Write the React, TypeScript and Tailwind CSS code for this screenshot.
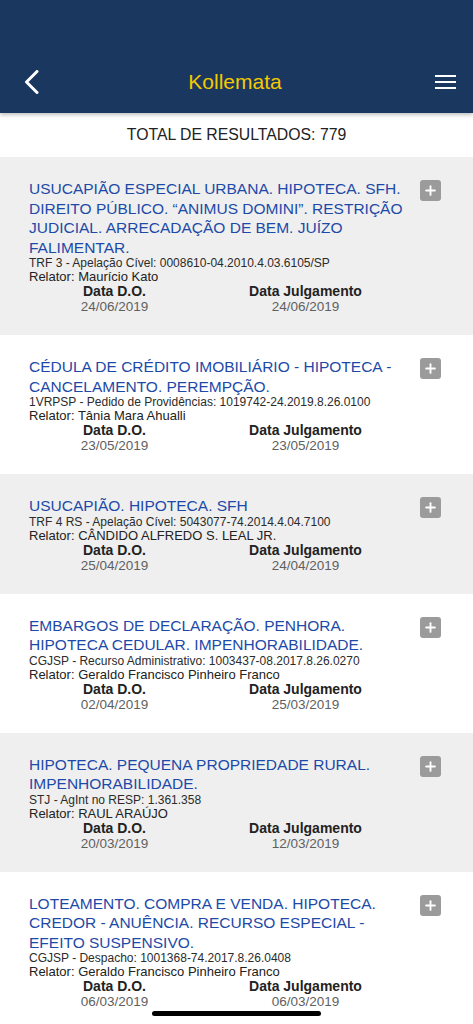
import { Plus } from "lucide-react";

interface Result {
  title: string;
  source: string;
  relator: string;
  dataDO: string;
  dataJulgamento: string;
}

const results: Result[] = [
  {
    title:
      "USUCAPIÃO ESPECIAL URBANA. HIPOTECA. SFH. DIREITO PÚBLICO. “ANIMUS DOMINI”. RESTRIÇÃO JUDICIAL. ARRECADAÇÃO DE BEM. JUÍZO FALIMENTAR.",
    source: "TRF 3 - Apelação Cível: 0008610-04.2010.4.03.6105/SP",
    relator: "Relator: Maurício Kato",
    dataDO: "24/06/2019",
    dataJulgamento: "24/06/2019",
  },
  {
    title: "CÉDULA DE CRÉDITO IMOBILIÁRIO - HIPOTECA - CANCELAMENTO. PEREMPÇÃO.",
    source: "1VRPSP - Pedido de Providências: 1019742-24.2019.8.26.0100",
    relator: "Relator: Tânia Mara Ahualli",
    dataDO: "23/05/2019",
    dataJulgamento: "23/05/2019",
  },
  {
    title: "USUCAPIÃO. HIPOTECA. SFH",
    source: "TRF 4 RS - Apelação Cível: 5043077-74.2014.4.04.7100",
    relator: "Relator: CÂNDIDO ALFREDO S. LEAL JR.",
    dataDO: "25/04/2019",
    dataJulgamento: "24/04/2019",
  },
  {
    title: "EMBARGOS DE DECLARAÇÃO. PENHORA. HIPOTECA CEDULAR. IMPENHORABILIDADE.",
    source: "CGJSP - Recurso Administrativo: 1003437-08.2017.8.26.0270",
    relator: "Relator: Geraldo Francisco Pinheiro Franco",
    dataDO: "02/04/2019",
    dataJulgamento: "25/03/2019",
  },
  {
    title: "HIPOTECA. PEQUENA PROPRIEDADE RURAL. IMPENHORABILIDADE.",
    source: "STJ - AgInt no RESP: 1.361.358",
    relator: "Relator: RAUL ARAÚJO",
    dataDO: "20/03/2019",
    dataJulgamento: "12/03/2019",
  },
  {
    title:
      "LOTEAMENTO. COMPRA E VENDA. HIPOTECA. CREDOR - ANUÊNCIA. RECURSO ESPECIAL - EFEITO SUSPENSIVO.",
    source: "CGJSP - Despacho: 1001368-74.2017.8.26.0408",
    relator: "Relator: Geraldo Francisco Pinheiro Franco",
    dataDO: "06/03/2019",
    dataJulgamento: "06/03/2019",
  },
];

function ResultCard({ item, shaded }: { item: Result; shaded: boolean }) {
  return (
    <div className={`${shaded ? "bg-[#efefef]" : "bg-white"} pt-[22px] pb-[21px]`}>
      <div className="flex items-start pl-[29px] pr-[32px]">
        <h2 className="flex-1 text-[15.5px] leading-[19.5px] text-[#1d4aa8] pr-[8px]">
          {item.title}
        </h2>
        {/* fixed-height slot so the button never stretches the row */}
        <div className="h-[19.5px]">
          <button className="mt-[1px] w-[21px] h-[21px] rounded-[3px] bg-[#9b9b9b] flex items-center justify-center">
            <Plus className="w-[15px] h-[15px] text-white" strokeWidth={3} />
          </button>
        </div>
      </div>
      <div className="pl-[29px] text-[12px] leading-[13px] text-[#2b2b2b]">{item.source}</div>
      <div className="pl-[29px] text-[13px] leading-[13px] text-[#222]">{item.relator}</div>
      <div className="flex pl-[19px]">
        <div className="w-[191px] text-center">
          <div className="text-[14px] leading-[16px] font-bold text-[#222]">Data D.O.</div>
          <div className="text-[13.5px] leading-[15px] text-[#5f5f5f]">{item.dataDO}</div>
        </div>
        <div className="w-[191px] text-center">
          <div className="text-[14px] leading-[16px] font-bold text-[#222]">Data Julgamento</div>
          <div className="text-[13.5px] leading-[15px] text-[#5f5f5f]">{item.dataJulgamento}</div>
        </div>
      </div>
    </div>
  );
}

export default function App() {
  return (
    <div className="relative w-[473px] h-[1024px] overflow-hidden bg-white font-['Liberation_Sans',Arial,sans-serif]">
      <header className="relative z-10 h-[113px] bg-[#19375f] shadow-[0_2px_4px_rgba(0,0,0,0.25)] flex items-end pb-[17px] pl-[24px] pr-[17px]">
        <div className="flex items-center w-full h-[28px]">
          <svg width="16" height="24" viewBox="0 0 16 24" className="text-white">
            <polyline
              points="13,1.5 2.5,12 13,22.5"
              fill="none"
              stroke="currentColor"
              strokeWidth="3"
              strokeLinecap="round"
              strokeLinejoin="round"
            />
          </svg>
          <h1 className="flex-1 text-center text-[21px] text-[#f5c900] pr-[5px]">Kollemata</h1>
          <svg width="21" height="16" viewBox="0 0 21 16" className="text-white">
            <rect x="0" y="1" width="21" height="2" fill="currentColor" />
            <rect x="0" y="7" width="21" height="2" fill="currentColor" />
            <rect x="0" y="13" width="21" height="2" fill="currentColor" />
          </svg>
        </div>
      </header>
      <div className="h-[44px] flex items-center justify-center text-[15.8px] text-[#222]">
        TOTAL DE RESULTADOS: 779
      </div>
      {results.map((item, i) => (
        <ResultCard key={i} item={item} shaded={i % 2 === 0} />
      ))}
      <div className="absolute left-[152px] bottom-[8px] w-[169px] h-[5px] rounded-full bg-black" />
    </div>
  );
}
